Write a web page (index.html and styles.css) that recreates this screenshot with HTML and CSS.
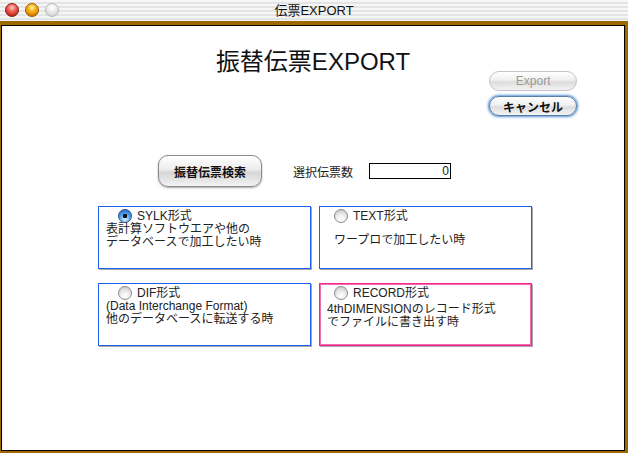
FILE: index.html
```html
<!DOCTYPE html>
<html>
<head>
    <title>伝票EXPORT</title>
    <link rel="stylesheet" href="styles.css">
</head>
<body>
    <div class="window">
        <div class="titlebar">
            <div class="lights">
                <span class="light light-close"></span>
                <span class="light light-min"></span>
                <span class="light light-zoom"></span>
            </div>
            <div class="title">伝票EXPORT</div>
        </div>

        <div class="frame">
            <div class="content">
                <div class="header">
                    <div></div>
                    <h1>振替伝票EXPORT</h1>
                    <div class="actions">
                        <button class="aqua" disabled>Export</button>
                        <button class="aqua aqua-default">キャンセル</button>
                    </div>
                </div>

                <div class="search-row">
                    <button class="search-btn">振替伝票検索</button>
                    <span class="count-label">選択伝票数</span>
                    <div class="count-field">0</div>
                </div>

                <div class="formats">
                    <div class="format format-left">
                        <div class="option"><span class="radio checked"></span>SYLK形式</div>
                        <p>表計算ソフトウエアや他の<br>データベースで加工したい時</p>
                    </div>
                    <div class="format format-right">
                        <div class="option"><span class="radio"></span>TEXT形式</div>
                        <p class="spaced">ワープロで加工したい時</p>
                    </div>
                    <div class="format format-left">
                        <div class="option"><span class="radio"></span>DIF形式</div>
                        <p>(Data Interchange Format)<br>他のデータベースに転送する時</p>
                    </div>
                    <div class="format format-right format-record">
                        <div class="option"><span class="radio"></span>RECORD形式</div>
                        <p class="record">4thDIMENSIONのレコード形式<br>でファイルに書き出す時</p>
                    </div>
                </div>
            </div>
        </div>
    </div>
</body>
</html>
```

FILE: styles.css
```css
body {
    margin: 0;
    padding: 0;
    font-family: "Liberation Sans", "Noto Sans CJK JP", sans-serif;
    color: #222;
    background-color: #fff;
}
.window {
    width: 628px;
    height: 453px;
    display: flex;
    flex-direction: column;
}
.titlebar {
    height: 21px;
    position: relative;
    background: repeating-linear-gradient(#f6f6f6 0, #f6f6f6 2px, #e4e4e4 2px, #e4e4e4 4px);
}
.lights {
    display: flex;
    gap: 6px;
    padding: 3px 0 0 5px;
}
.light {
    width: 14px;
    height: 14px;
    border-radius: 50%;
    box-sizing: border-box;
}
.light-close {
    background: radial-gradient(circle at 50% 30%, #ffd0c8 0, #f06a5c 35%, #c42018 80%);
    border: 1px solid #8a1a14;
}
.light-min {
    background: radial-gradient(circle at 50% 30%, #fff0b0 0, #f8b820 35%, #d47800 80%);
    border: 1px solid #9a5a00;
}
.light-zoom {
    background: radial-gradient(circle at 50% 30%, #ffffff 0, #eeeeee 40%, #cfcfcf 85%);
    border: 1px solid #b8b8b8;
}
.title {
    position: absolute;
    top: 0;
    left: 0;
    right: 0;
    text-align: center;
    font-size: 13px;
    line-height: 21px;
    color: #111;
}
.frame {
    flex: 1;
    display: flex;
    border-style: solid;
    border-color: #a06800;
    border-width: 4px 3px 2px 1px;
}
.content {
    flex: 1;
    border: 1px solid #000;
    background-color: #fff;
}
.header {
    display: grid;
    grid-template-columns: 1fr auto 1fr;
}
h1 {
    margin: 22px 0 0 0;
    font-size: 24px;
    line-height: 28px;
    font-weight: normal;
    color: #111;
}
.actions {
    display: flex;
    flex-direction: column;
    align-items: flex-start;
    gap: 5px;
    padding: 45px 0 0 79px;
}
.aqua {
    width: 88px;
    height: 20px;
    padding: 0;
    border: 1px solid #9a9a9a;
    border-radius: 10px;
    background: linear-gradient(#ffffff 0, #f0f0f0 45%, #dcdcdc 55%, #f4f4f4 100%);
    font-family: "Liberation Sans", "Noto Sans CJK JP", sans-serif;
    font-size: 12px;
    color: #111;
}
.aqua:disabled {
    color: #9a9a9a;
    border-color: #c4c4c4;
}
.aqua-default {
    font-weight: bold;
    border-color: #5a7ca8;
    box-shadow: 0 0 0 1px #8db4e0, 0 0 2px 2px #b8d4f0;
}
.search-row {
    display: flex;
    align-items: center;
    padding-left: 156px;
    margin-top: 39px;
}
.search-btn {
    width: 104px;
    height: 32px;
    padding: 0;
    border: 1px solid #8a8a8a;
    border-radius: 10px;
    background: linear-gradient(#ffffff 0, #ececec 45%, #d6d6d6 55%, #f2f2f2 100%);
    box-shadow: 0 1px 2px rgba(0, 0, 0, 0.35);
    font-family: "Liberation Sans", "Noto Sans CJK JP", sans-serif;
    font-size: 12px;
    font-weight: bold;
    color: #111;
}
.count-label {
    margin-left: 31px;
    font-size: 12px;
}
.count-field {
    width: 78px;
    height: 14px;
    margin-left: 16px;
    padding: 0 1px 0 1px;
    border: 1px solid #000;
    text-align: right;
    font-size: 12px;
    line-height: 14px;
}
.formats {
    display: grid;
    grid-template-columns: 213px 213px;
    grid-auto-rows: 63px;
    column-gap: 8px;
    row-gap: 14px;
    padding-left: 96px;
    margin-top: 19px;
}
.format {
    box-sizing: border-box;
    border: 1px solid #1e5ef0;
    box-shadow: 1px 1px 0 #a8a8a8;
    padding-top: 2px;
    font-size: 12px;
}
/* the record option keeps its magenta frame */
.format-record {
    border-color: #f02890;
    box-shadow: inset 0 0 0 1px #f46aae, 1px 1px 0 #a8a8a8;
}
.option {
    display: flex;
    align-items: center;
    gap: 5px;
    height: 14px;
    line-height: 14px;
}
.format-left .option {
    padding-left: 19px;
}
.format-right .option {
    padding-left: 14px;
}
.format p {
    margin: 0;
    line-height: 13px;
    padding-left: 7px;
}
.format-right p {
    padding-left: 14px;
}
.format p.spaced {
    margin-top: 11px;
}
.format p.record {
    margin-top: 3px;
    padding-left: 7px;
}
.radio {
    width: 14px;
    height: 14px;
    box-sizing: border-box;
    border-radius: 50%;
    border: 1px solid #8c8c8c;
    background: radial-gradient(circle at 50% 75%, #ffffff 0, #eeeeee 40%, #c8c8c8 90%);
}
.radio.checked {
    border-color: #2a4f8a;
    background: radial-gradient(circle, #111 0, #111 2px, transparent 2.5px),
                radial-gradient(circle at 50% 80%, #d8f0ff 0, #5aa8f0 45%, #1e5cc0 95%);
}
```
